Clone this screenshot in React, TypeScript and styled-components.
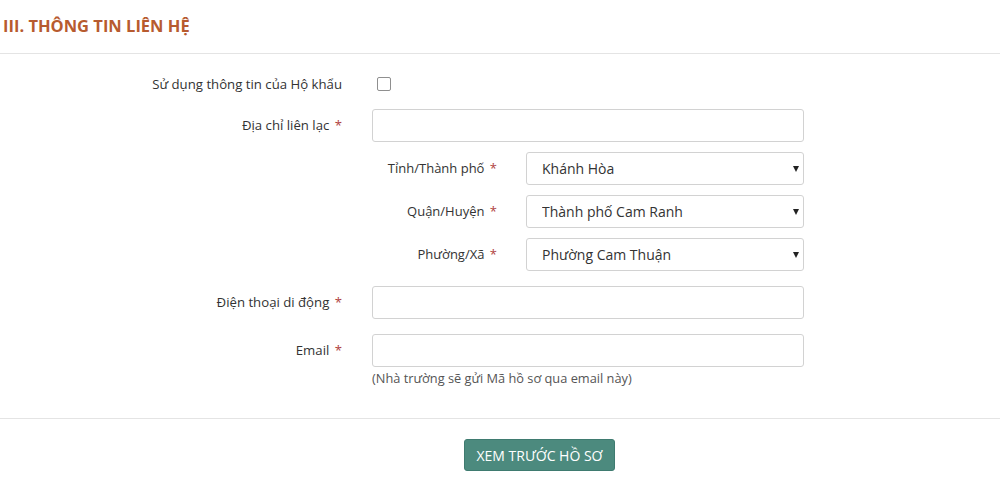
import * as React from "react";
import styled, { createGlobalStyle } from "styled-components";

const GlobalStyle = createGlobalStyle`
  html, body {
    margin: 0;
    padding: 0;
    background: #fff;
    font-family: "Open Sans", "Noto Sans", sans-serif;
    color: #333;
  }
  * { box-sizing: border-box; }
`;

export default function App() {
  return (
    <Page>
      <GlobalStyle />
      <Header>
        <Title>III. THÔNG TIN LIÊN HỆ</Title>
      </Header>

      <Form>
        <CheckRow>
          <Label>Sử dụng thông tin của Hộ khẩu</Label>
          <Field>
            <Check type="checkbox" />
          </Field>
        </CheckRow>

        <Row>
          <Label>
            Địa chỉ liên lạc <Req>*</Req>
          </Label>
          <TextInput type="text" />
        </Row>

        <SubBlock>
          <span />
          <SubList>
            <SelectRow label="Tỉnh/Thành phố" value="Khánh Hòa" />
            <SelectRow label="Quận/Huyện" value="Thành phố Cam Ranh" />
            <SelectRow label="Phường/Xã" value="Phường Cam Thuận" />
          </SubList>
        </SubBlock>

        <Row $top={15}>
          <Label>
            Điện thoại di động <Req>*</Req>
          </Label>
          <TextInput type="text" />
        </Row>

        <Row $top={15}>
          <Label>
            Email <Req>*</Req>
          </Label>
          <Field>
            <TextInput type="text" />
            <Help>(Nhà trường sẽ gửi Mã hồ sơ qua email này)</Help>
          </Field>
        </Row>
      </Form>

      <Footer>
        <PreviewButton type="button">XEM TRƯỚC HỒ SƠ</PreviewButton>
      </Footer>
    </Page>
  );
}

function SelectRow({ label, value }: { label: string; value: string }) {
  return (
    <SubRow>
      <SubLabel>
        {label} <Req>*</Req>
      </SubLabel>
      <SelectWrap>
        <Select defaultValue={value}>
          <option value={value}>{value}</option>
        </Select>
      </SelectWrap>
    </SubRow>
  );
}

const Page = styled.div`
  width: 1000px;
  height: 501px;
  overflow: hidden;
`;

const Header = styled.div`
  height: 54px;
  padding: 14px 0 0 3px;
  border-bottom: 1px solid #e4e4e4;
`;

const Title = styled.h2`
  margin: 0;
  font-size: 16.5px;
  line-height: 24px;
  font-weight: 700;
  color: #b75b2f;
`;

const Form = styled.div`
  padding: 20px 0 31px;
  border-bottom: 1px solid #e4e4e4;
`;

const Row = styled.div<{ $top?: number }>`
  display: grid;
  grid-template-columns: 342px 432px;
  column-gap: 30px;
  align-items: start;
  margin-top: ${(p) => p.$top ?? 0}px;
`;

const CheckRow = styled(Row)`
  align-items: center;
  height: 20px;
  margin-bottom: 15px;
`;

const Label = styled.label`
  text-align: right;
  font-size: 13.2px;
  line-height: 33px;
  color: #333;
  white-space: nowrap;
  ${CheckRow} & {
    line-height: 20px;
  }
`;

const Req = styled.span`
  margin-left: 2px;
  color: #b0413e;
`;

const Field = styled.div`
  display: flex;
  flex-direction: column;
`;

const Check = styled.input`
  appearance: none;
  margin: 0 0 0 5px;
  width: 14px;
  height: 14px;
  border: 1px solid #8f8f8f;
  border-radius: 2px;
  background: #fff;
`;

const TextInput = styled.input`
  width: 432px;
  height: 33px;
  border: 1px solid #d2d2d2;
  border-radius: 3px;
  padding: 0 14px;
  font-family: inherit;
  font-size: 14px;
  background: #fff;
  outline: none;
`;

const Help = styled.div`
  margin-top: 2px;
  font-size: 12.8px;
  line-height: 18px;
  color: #555;
`;

const SubBlock = styled(Row)`
  margin-top: 10px;
`;

const SubList = styled.div`
  display: flex;
  flex-direction: column;
  gap: 10px;
`;

const SubRow = styled.div`
  display: grid;
  grid-template-columns: 125px 278px;
  column-gap: 29px;
`;

const SubLabel = styled.label`
  text-align: right;
  font-size: 13px;
  line-height: 33px;
  color: #333;
  white-space: nowrap;
`;

const SelectWrap = styled.div`
  position: relative;
  &::after {
    content: "";
    position: absolute;
    right: 5px;
    top: 14px;
    border-left: 3.5px solid transparent;
    border-right: 3.5px solid transparent;
    border-top: 6px solid #222;
    pointer-events: none;
  }
`;

const Select = styled.select`
  appearance: none;
  width: 278px;
  height: 33px;
  border: 1px solid #d2d2d2;
  border-radius: 3px;
  padding: 0 24px 0 15px;
  font-family: inherit;
  font-size: 14px;
  color: #333;
  background: #fff;
  outline: none;
`;

const Footer = styled.div`
  padding: 20px 0 0 464px;
`;

const PreviewButton = styled.button`
  height: 32px;
  width: 151px;
  border: 1px solid #3f7b70;
  border-radius: 3px;
  background: #4c8a7e;
  color: #fff;
  font-family: inherit;
  font-size: 14px;
  padding: 0;
  cursor: pointer;
`;
